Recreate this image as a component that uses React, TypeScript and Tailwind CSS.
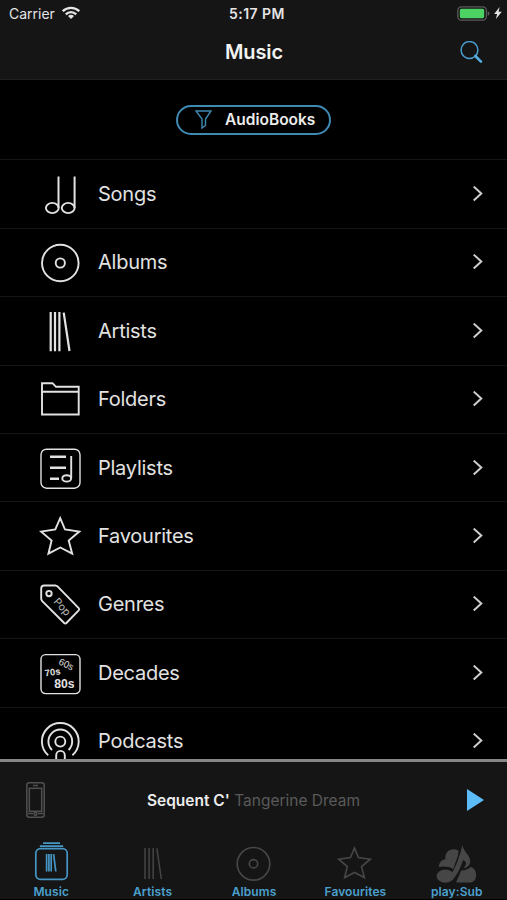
import type { ReactNode } from "react";

interface MenuItem {
  label: string;
  icon: ReactNode;
}

interface TabItem {
  label: string;
  icon: ReactNode;
}

const albumShape = (
  <>
    <circle cx="20.3" cy="21" r="18.3" />
    <circle cx="20.3" cy="21" r="4.6" />
  </>
);

const starShape = (
  <path d="M20.2 2.2 25 13.5 39.3 15.6 28.7 24.5 32.2 37.7 20.3 31.5 8.4 37.7 11.6 24.5 1.2 15.6 15.3 13.5Z" />
);

const menuItems: MenuItem[] = [
  {
    label: "Songs",
    icon: (
      <>
        <ellipse cx="12.3" cy="34" rx="6.4" ry="5.1" />
        <ellipse cx="28.2" cy="34" rx="6.4" ry="5.1" />
        <path d="M18.5 2.6v31.4M34.6 2.6v31.4" strokeWidth="2" />
      </>
    ),
  },
  { label: "Albums", icon: albumShape },
  {
    label: "Artists",
    icon: (
      <path
        strokeWidth="2.2"
        d="M10.7 1v39.3M15 1v39.3M19.4 1v39.3M23.7 1.6l5.8 38.4"
      />
    ),
  },
  {
    label: "Folders",
    icon: <path d="M2 35.5V4.2h10.5L16 7.8h22.7v27.7ZM2 12.8h36.7" />,
  },
  {
    label: "Playlists",
    icon: (
      <>
        <rect x="1" y="1.2" width="39" height="39" rx="5.5" strokeWidth="1.4" />
        <path strokeWidth="2.4" d="M10 8.7h16M10 19.7h16M10 30.7h9" />
        <path d="M31.2 8v22.3" />
        <ellipse cx="26.7" cy="30.4" rx="4.4" ry="3.2" />
      </>
    ),
  },
  { label: "Favourites", icon: starShape },
  {
    label: "Genres",
    icon: (
      <>
        <path
          strokeLinejoin="round"
          d="M1.2 4.5Q1.2 1.5 4.2 1.5H15.7L17.5 2.3 38.7 24.2Q39.7 25.3 38.7 26.3L26.4 39Q25.3 40 24.2 39L2 16.8 1.2 15.2Z"
        />
        <circle cx="9" cy="9.6" r="2.7" />
        <text
          x="22"
          y="26.4"
          fontSize="10.5"
          textAnchor="middle"
          fill="currentColor"
          stroke="none"
          opacity="0.8"
          transform="rotate(48 22 23)"
        >
          Pop
        </text>
      </>
    ),
  },
  {
    label: "Decades",
    icon: (
      <>
        <rect x="1" y="1.6" width="39" height="39" rx="4.5" strokeWidth="1.4" />
        <g
          className="font-['Liberation_Sans',sans-serif]"
          fill="currentColor"
          stroke="none"
          textAnchor="middle"
        >
          <text x="26.2" y="14.5" fontSize="9.5" transform="rotate(25 26.2 11.5)">
            60s
          </text>
          <text
            x="12.6"
            y="22.4"
            fontSize="9.4"
            fontWeight="700"
            transform="rotate(-9 12.6 19.2)"
          >
            70s
          </text>
          <text x="24.4" y="35.2" fontSize="12.2" fontWeight="700">
            80s
          </text>
        </g>
      </>
    ),
  },
  {
    label: "Podcasts",
    icon: (
      <>
        <circle cx="20.3" cy="20.6" r="5" />
        <path d="M12 29A11.9 11.9 0 1 1 28.6 29" />
        <path d="M8.2 34.3A18.4 18.4 0 1 1 32.4 34.3" />
        <path d="M16.2 40v-5.8a4.3 4.3 0 0 1 8.6 0V40" />
      </>
    ),
  },
];

const tabItems: TabItem[] = [
  {
    label: "Music",
    icon: (
      <g stroke="#4596c4">
        <path d="M13 1.2h17M9.8 4.1h23.4" strokeWidth="1.7" />
        <rect x="5.8" y="6.7" width="31.4" height="30.6" rx="4.5" />
        <path d="M16.6 12v17.5M18.9 12v17.5M21.2 12v17.5M23.6 12.2l2.2 17.3" />
      </g>
    ),
  },
  {
    label: "Artists",
    icon: (
      <path d="M13 6v31M17.1 6v31M21.2 6v31M24.9 6.4l4.4 30.6" strokeWidth="1.5" />
    ),
  },
  {
    label: "Albums",
    icon: (
      <>
        <circle cx="20.5" cy="21.8" r="16.3" />
        <circle cx="20.5" cy="21.8" r="4.2" />
      </>
    ),
  },
  {
    label: "Favourites",
    icon: (
      <g transform="translate(3.7 4.3) scale(.83)" strokeWidth="2">
        {starShape}
      </g>
    ),
  },
  {
    label: "play:Sub",
    icon: (
      <g fill="currentColor" stroke="none">
        <path d="M2.9 25C3 20.5 5.5 17.8 9.4 17.2 8.6 11 12.5 7 18.4 7.2 20.2 7.3 21.4 8 22.6 9L22 13.5 17.2 27C13 24.2 7 24.2 2.9 25Z" />
        <ellipse cx="9.4" cy="34.2" rx="8.8" ry="6.6" />
        <path d="M15.4 31.5C19 27 24.2 13 26.4 3.2 28 10.5 34.4 13.2 34.2 19.6 34.1 23.2 31.5 25.4 27.2 26.6 29 24.6 30.4 22.6 29.8 20.6 29.4 19.2 28.4 18.6 27 18.3L25.6 22.2C23.2 28 20.6 33.6 17.8 36.4Z" />
        <path d="M20 40.6 25.2 28.4C29.4 28.4 32.2 27.2 34.8 25 42.2 27 42 40.6 33.9 40.6Z" />
      </g>
    ),
  },
];

function StatusBar() {
  return (
    <div className="relative flex h-[26px] items-center justify-between pl-[9px] pr-[5px] text-[#e4e4e4]">
      <div className="flex items-center gap-[7px]">
        <span className="text-[14px]">Carrier</span>
        <svg width="18" height="14" viewBox="0 0 18 14" fill="none" stroke="currentColor" strokeWidth="2.3">
          <path d="M.8 5.2a11.6 11.6 0 0 1 16.4 0M3.8 8.4a7.3 7.3 0 0 1 10.4 0" />
          <path d="M9 13 6 10.1a4.3 4.3 0 0 1 6 0Z" fill="currentColor" stroke="none" />
        </svg>
      </div>
      <span className="absolute inset-x-0 pl-[7px] text-center text-[14px] font-semibold tracking-[0.45px]">
        5:17 PM
      </span>
      <div className="flex items-center gap-1">
        <svg width="33" height="15" viewBox="0 0 33 15">
          <rect x="0.8" y="0.8" width="28.6" height="13.4" rx="3.6" fill="none" stroke="#5a5a5a" strokeWidth="1.3" />
          <rect x="2.8" y="2.8" width="24.4" height="9.4" rx="1.6" fill="#4cd263" />
          <path d="M30.7 5.2q1.8.6 1.8 2.3t-1.8 2.3Z" fill="#5a5a5a" />
        </svg>
        <svg width="8" height="12" viewBox="0 0 8 12" fill="currentColor">
          <path d="M5.6 0 .2 6.9h2.9L1.9 12l5.9-7.3H4.6Z" />
        </svg>
      </div>
    </div>
  );
}

function Header() {
  return (
    <header className="h-20 shrink-0 border-b border-[#202020] bg-[#151515]">
      <StatusBar />
      <div className="relative flex h-[52px] items-center justify-end pr-6">
        <h1 className="absolute inset-x-0 pl-px text-center text-[20px] font-semibold tracking-[-0.1px] text-[#f2f2f2]">
          Music
        </h1>
        <svg className="relative" width="23" height="23" viewBox="0 0 23 23" fill="none" stroke="#4a9fd0">
          <circle cx="9.5" cy="9" r="8.4" strokeWidth="1.5" />
          <path d="m15.3 15 5.7 5.6" strokeWidth="2.6" stroke="#55acdf" strokeLinecap="round" />
        </svg>
      </div>
    </header>
  );
}

function MenuRow({ label, icon }: MenuItem) {
  return (
    <li className="flex h-[68.4px] shrink-0 items-center border-b border-[#141414] pl-10 pr-6 text-[#e2e2e2]">
      <svg
        className="overflow-visible"
        width="40"
        height="40"
        viewBox="0 0 40 40"
        fill="none"
        stroke="currentColor"
        strokeWidth="1.9"
      >
        {icon}
      </svg>
      <span className="ml-[18px] flex-1 text-[20px] tracking-[-0.25px]">{label}</span>
      <svg width="11" height="16" viewBox="0 0 11 16" fill="none" stroke="#cfcfcf" strokeWidth="2">
        <path d="m1.7.6 7.6 7-7.6 7" />
      </svg>
    </li>
  );
}

function NowPlaying() {
  return (
    <div className="relative flex h-[76px] shrink-0 items-center justify-between border-t-[3px] border-[#868686] pl-[26px] pr-[23px] pt-0.5">
      <svg width="19" height="36" viewBox="0 0 19 36" fill="none" stroke="#505050" strokeWidth="1.5">
        <rect x="0.8" y="0.8" width="17.4" height="34.4" rx="2.5" />
        <rect x="3.3" y="6.3" width="12.4" height="23" />
        <path d="M7 3.6h5M2 31.5h5M12 31.5h5" />
        <circle cx="9.5" cy="32" r="1.4" />
      </svg>
      <p className="absolute inset-x-0 pt-[3px] text-center text-[15.5px] text-[#5a5a5a]">
        <span className="font-semibold text-[#ececec]">Sequent C'</span> Tangerine Dream
      </p>
      <svg width="17" height="22" viewBox="0 0 17 22" fill="#5bbcf8">
        <path d="M0 0 17 11 0 22Z" />
      </svg>
    </div>
  );
}

function TabBar() {
  return (
    <nav className="grid h-[65px] shrink-0 grid-cols-5 border-b border-black">
      {tabItems.map((tab) => (
        <div key={tab.label} className="flex flex-col items-center pt-[7px]">
          <svg
            className="overflow-visible text-[#464646]"
            width="41"
            height="41"
            viewBox="0 0 41 41"
            fill="none"
            stroke="currentColor"
            strokeWidth="1.7"
          >
            {tab.icon}
          </svg>
          <span className="mt-[1px] pl-px text-[12px] font-semibold leading-4 tracking-[0.1px] text-[#4ba0ce]">
            {tab.label}
          </span>
        </div>
      ))}
    </nav>
  );
}

export default function App() {
  return (
    <div className="flex h-[900px] w-[507px] flex-col overflow-hidden bg-black font-['Inter',sans-serif]">
      <Header />
      <main className="flex min-h-0 flex-1 flex-col overflow-hidden">
        <div className="flex h-[80.4px] shrink-0 items-center justify-center border-b border-[#141414]">
          <button className="flex h-[30px] w-[155px] items-center rounded-full border-2 border-[#3f8ab3] pl-[17px] text-[15.5px] font-semibold text-[#ececec]">
            <svg width="17" height="19" viewBox="0 0 17 19" fill="none" stroke="#3f8ab3" strokeWidth="1.4">
              <path d="M1 1h15l-5.5 8v6.5L7 18V9Z" />
            </svg>
            <span className="ml-[13px]">AudioBooks</span>
          </button>
        </div>
        <ul className="flex flex-col">
          {menuItems.map((item) => (
            <MenuRow key={item.label} label={item.label} icon={item.icon} />
          ))}
        </ul>
      </main>
      <footer className="shrink-0 bg-[#151515]">
        <NowPlaying />
        <TabBar />
      </footer>
    </div>
  );
}
